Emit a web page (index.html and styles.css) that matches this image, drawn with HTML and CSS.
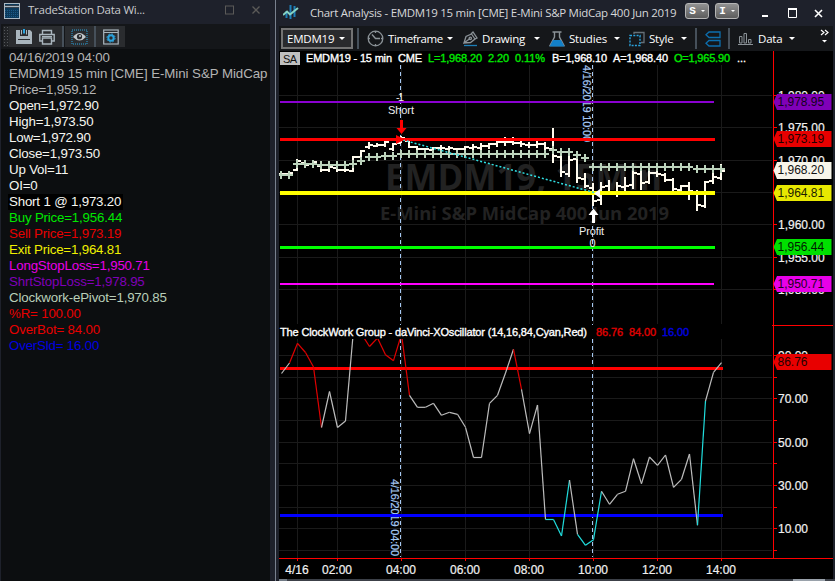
FILE: index.html
```html
<!DOCTYPE html>
<html lang="en">

<head>
  <meta charset="UTF-8" />
  <meta name="viewport" content="width=device-width, initial-scale=1.0" />
  <title>TradeStation</title>
  <link rel="stylesheet" href="styles.css">
</head>

<body>
  <div class="workspace">
    <section class="data-window">
      <header class="titlebar">
        <svg class="app-icon" width="17" height="17" viewBox="0 0 17 17">
          <rect x="0.5" y="0.5" width="15" height="15" fill="#0c3a5c" stroke="#a9b8c4" />
          <path d="M1 2.5H15M1 4.5H15" stroke="#38424e" />
          <path d="M1 3.5H15" stroke="#a9b8c4" />
          <path d="M1 7.5H15M1 9.5H15M1 11.5H15M1 13.5H15" stroke="#1c5a88" stroke-dasharray="1 1" />
        </svg>
        <span class="title">TradeStation Data Wi...</span>
        <svg class="win-buttons" width="38" height="12" viewBox="0 0 38 12">
          <rect x="1.5" y="2" width="8" height="8" fill="none" stroke="#5b5a58" />
          <path d="M28.5 2.5l7 7M35.5 2.5l-7 7" stroke="#5b5a58" stroke-width="1.3" />
        </svg>
      </header>

      <div class="data-body">
        <div class="data-toolbar">
          <span class="grip"></span>
          <div class="tool wide">
            <svg width="16" height="16" viewBox="0 0 16 16">
              <path d="M0 1H4V7H12V1H14L16 3V15H0Z" fill="#a9b5bd" />
              <path d="M2 10.500H14" stroke="#2a2c2f" />
              <path d="M5.500 1V5.500M10.500 1V5.500" stroke="#a9b5bd" />
              <path d="M8 0V4.500" stroke="#2ba3dd" stroke-width="2" />
            </svg>
            <svg width="16" height="16" viewBox="0 0 16 16" fill="none" stroke="#a9b5bd" stroke-width="1.4">
              <path d="M3.5 5V1.5H12.5V5M3.5 12H.8V5.5H15.2V12H12.5M3.5 9H12.5V15H3.5Z" />
              <path d="M3 7.5H13" stroke-width="1" />
            </svg>
          </div>
          <div class="tool">
            <svg width="17" height="16" viewBox="0 0 17 16">
              <rect x="1" y="1" width="15" height="14" fill="none" stroke="#2ba3dd" stroke-dasharray="1 1" />
              <path d="M2 8Q8.500 0 15 8Q8.500 15 2 8Z" fill="#c2c7ca" />
              <circle cx="8.500" cy="7.700" r="2.600" fill="#2a2c2f" /><circle cx="9" cy="7" r="1" fill="#c2c7ca" />
            </svg>
          </div>
          <div class="tool">
            <svg width="16" height="16" viewBox="0 0 16 16" fill="none">
              <rect x=".7" y="1" width="14.500" height="14" stroke="#a9b5bd" stroke-width="1.200" />
              <path d="M1 3.5H15" stroke="#a9b5bd" />
              <circle cx="8" cy="9" r="2.700" stroke="#2ba3dd" stroke-width="2" />
              <circle cx="8" cy="9" r="4.100" stroke="#2ba3dd" stroke-dasharray="1.600 1.620" />
            </svg>
          </div>
        </div>

        <div class="values">
          <p>04/16/2019 04:00</p>
          <p class="symbol-row">EMDM19 15 min [CME] E-Mini S&amp;P MidCap</p>
          <p>Price=1,959.12</p>
          <p class="white">Open=1,972.90</p>
          <p class="white">High=1,973.50</p>
          <p class="white">Low=1,972.90</p>
          <p class="white">Close=1,973.50</p>
          <p class="white">Up Vol=11</p>
          <p class="white">OI=0</p>
          <p class="white position">Short 1 @ 1,973.20</p>
          <p class="green">Buy Price=1,956.44</p>
          <p class="red">Sell Price=1,973.19</p>
          <p class="yellow">Exit Price=1,964.81</p>
          <p class="magenta">LongStopLoss=1,950.71</p>
          <p class="purple">ShrtStopLoss=1,978.95</p>
          <p class="pivot">Clockwork-ePivot=1,970.85</p>
          <p class="red">%R= 100.00</p>
          <p class="red">OverBot= 84.00</p>
          <p class="blue">OverSld= 16.00</p>
        </div>
      </div>
    </section>

    <section class="chart-window">
      <header class="titlebar">
        <svg class="chart-icon" width="16" height="16" viewBox="0 0 16 16" fill="none">
          <path d="M3.500 7V14M7.500 1V15M11.500 2V13" stroke="#1c7fb8" stroke-width="2" />
          <path d="M0 11L4 7.500L7 10.500L15 4" stroke="#86d3c4" stroke-width="2" />
        </svg>
        <span class="title">Chart Analysis - EMDM19 15 min [CME] E-Mini S&amp;P MidCap 400 Jun 2019</span>
        <span class="link-button">S<i class="caret"></i></span>
        <span class="link-button">I<i class="caret"></i></span>
        <svg class="win-controls" width="44" height="12" viewBox="0 0 44 12" fill="none" stroke="#fff">
          <path d="M0 9H6" stroke-width="2" />
          <path d="M26.500 2V10.500H34.500V2" />
          <path d="M26 2H35" stroke-width="2" />
        </svg>
        <svg class="win-close" width="9" height="9" viewBox="0 0 9 9" stroke="#fff" stroke-width="1.600">
          <path d="M1 1l7 7M8 1l-7 7" />
        </svg>
      </header>

      <nav class="chart-toolbar">
        <div class="symbol-button">EMDM19<i class="caret"></i></div>
        <span class="separator first"></span>
        <div class="menu timeframe">
          <svg width="17" height="17" viewBox="0 0 17 17" fill="none" stroke="#8b9297">
            <circle cx="8.500" cy="8.500" r="7.300" stroke-width="1.300" />
            <path d="M8.500 1V3M8.500 14V16M1 8.500H3M14 8.500H16M5 4.500L8.500 8.500H13" stroke-width="1.400" />
          </svg>
          <span>Timeframe</span><i class="caret"></i>
        </div>
        <div class="menu drawing">
          <svg width="15" height="16" viewBox="0 0 15 16" fill="none" stroke="#8b9297" stroke-width="1.300">
            <path d="M1 12L3 5.500L8.500 3L12 8L7.500 11.500L1 12L7 7.500M8 3L10 1L14 7L12 8" />
            <circle cx="7.300" cy="7.300" r="1.200" />
            <path d="M1 14.500H14" stroke="#1c7fb8" />
          </svg>
          <span>Drawing</span><i class="caret"></i>
        </div>
        <div class="menu studies">
          <svg width="16" height="16" viewBox="0 0 16 16">
            <path d="M3.500 1H12.500M5.500 1V6L1 14.500H15L10.500 6V1" fill="none" stroke="#8b9297" stroke-width="1.400" />
            <path d="M4 9H12L15.500 15.500H.5Z" fill="#1381c9" />
          </svg>
          <span>Studies</span><i class="caret"></i>
        </div>
        <div class="menu style">
          <svg width="16" height="16" viewBox="0 0 16 16" fill="none">
            <path d="M5 3V1.500H15V11.500H12" stroke="#667078" stroke-width="1.300" />
            <rect x="1" y="4.500" width="10" height="10" stroke="#2ba3dd" stroke-width="1.400" stroke-dasharray="2 1.300" />
          </svg>
          <span>Style</span><i class="caret"></i>
        </div>
        <span class="separator"></span>
        <svg class="tags-icon" width="16" height="16" viewBox="0 0 16 16" fill="none" stroke="#0d6fae" stroke-width="1.300">
          <path d="M4 1H15V6.500H4L1 3.800ZM4 9.500H15V15H4L1 12.200Z" />
        </svg>
        <span class="separator"></span>
        <div class="menu data">
          <svg width="16" height="14" viewBox="0 0 16 14" fill="none" stroke="#8b9297">
            <path d="M1.500 4.500H4V11H1.500ZM6 1.500H8.500V11H6ZM10.500 7.500H13V11H10.500ZM0 12.500H15" />
          </svg>
          <span>Data</span><i class="caret"></i>
        </div>
        <div class="overflow"><svg width="9" height="16" viewBox="0 0 9 16" fill="none" stroke="#fff" stroke-width="1.200">
            <path d="M1 1l3 2.500L1 6M5 1l3 2.500L5 6" /><path d="M2 11H7L4.500 13.500Z" fill="#fff" stroke="none" />
          </svg></div>
      </nav>

      <svg class="chart" id="chart" width="556" height="530" viewBox="279 51 556 530">
        <defs>
          <clipPath id="lowerPane"><rect x="279" y="339" width="494" height="219" /></clipPath>
        </defs>
        <rect x="279" y="51" width="554" height="528" fill="#000" />
        <rect x="279" y="579" width="556" height="2" fill="#3c4048" />
        <rect x="279" y="579" width="8" height="2" fill="#727b86" />
        <rect x="793" y="579" width="32" height="2" fill="#9aa2ab" />

        <g id="grid" class="grid"></g>

        <g class="watermark">
          <text x="385" y="190" font-size="36" textLength="277" lengthAdjust="spacingAndGlyphs">EMDM19, 15Min</text>
          <text x="380" y="220" font-size="18" textLength="289" lengthAdjust="spacingAndGlyphs">E-Mini S&amp;P MidCap 400 Jun 2019</text>
        </g>

        <!-- crosshair lines -->
        <path class="crosshair" d="M400.500 65V325M400.500 339V557M592.500 65V325M592.500 339V557" />
        <text class="crosshair-label" transform="translate(582.500 65) rotate(90)" textLength="77">4/16/2019 10:00</text>
        <text class="crosshair-label" transform="translate(390.500 479) rotate(90)" textLength="77">4/16/2019 04:00</text>

        <g id="bars" class="bars"></g>
        <g id="pivot" class="pivot-line"></g>

        <!-- price levels -->
        <path d="M280 102H714" stroke="#8a00d0" stroke-width="2" />
        <path d="M280 139.500H715" stroke="#f00" stroke-width="3" />
        <path d="M280 193H715" stroke="#ff0" stroke-width="4" />
        <path d="M280 247.500H715" stroke="#0f0" stroke-width="3" />
        <path d="M280 284H714" stroke="#f0f" stroke-width="2" />

        <!-- trade entry and exit -->
        <path d="M403 140L596 193" stroke="#2fe0e4" stroke-width="1.500" stroke-dasharray="2 2" />
        <path d="M396 135L405 139.500L396 144Z" fill="#f00" />
        <path d="M594 193.500L600 189V198Z" fill="#fff" />
        <path d="M400 120H403V128H406.500L401.500 134L396.500 128H400Z" fill="#f00" />
        <path d="M592 223H595V215H598.500L593.500 208.500L588.500 215H592Z" fill="#fff" />
        <text class="note" x="396" y="101" textLength="8">-1</text>
        <text class="note" x="388" y="114" textLength="26">Short</text>
        <text class="note" x="579" y="235" textLength="25">Profit</text>
        <text class="note" x="589.500" y="247">0</text>

        <!-- status line -->
        <rect x="280" y="52" width="20" height="13" fill="#c0c0c0" />
        <g class="status">
          <text class="badge" x="283" y="62.500" textLength="14">SA</text>
          <text class="light" x="306" y="62" textLength="86">EMDM19 - 15 min</text>
          <text class="light" x="398" y="62" textLength="24">CME</text>
          <text class="up" x="428" y="62" textLength="54">L=1,968.20</text>
          <text class="up" x="488" y="62" textLength="21">2.20</text>
          <text class="up" x="515" y="62" textLength="30">0.11%</text>
          <text class="light" x="552" y="62" textLength="55">B=1,968.10</text>
          <text class="light" x="613" y="62" textLength="55">A=1,968.40</text>
          <text class="up" x="674" y="62" textLength="56">O=1,965.90</text>
          <text class="light" x="737" y="62">...</text>
          <text class="light" x="280" y="336" textLength="307">The ClockWork Group - daVinci-XOscillator (14,16,84,Cyan,Red)</text>
          <text class="over-bought" x="596" y="336" textLength="27">86.76</text>
          <text class="over-bought" x="629" y="336" textLength="27">84.00</text>
          <text class="over-sold" x="662" y="336" textLength="27">16.00</text>
        </g>

        <!-- oscillator -->
        <path d="M280 368.500H723" stroke="#f00" stroke-width="3" />
        <path d="M280 515.500H723" stroke="#00f" stroke-width="3" />
        <g id="oscillator" class="oscillator" clip-path="url(#lowerPane)"></g>

        <path class="axis" d="M773.500 51V558M772 325.500H833M279 558.500H833" />
        <g id="scales" class="scales"></g>
      </svg>
    </section>
  </div>

  <script src="chart.js"></script>
</body>

</html>
```
FILE: chart.js
```js
const NS = "http://www.w3.org/2000/svg";
const START_X = 281;
const STEP = 8;

function add(parentId, tag, attrs, text) {
  const el = document.createElementNS(NS, tag);
  for (const key in attrs) el.setAttribute(key, attrs[key]);
  if (text) el.textContent = text;
  document.getElementById(parentId).appendChild(el);
}

// grid
const columns = [297, 337, 401, 465, 529, 593, 657, 721];
const upperRows = [95, 127, 160, 192, 224, 257, 289];
const lowerRows = [355, 377, 398, 420, 442, 463, 485, 507, 528, 550];
columns.forEach(x => add("grid", "path", { d: `M${x + 0.5} 65V324M${x + 0.5} 339V558` }));
upperRows.concat(lowerRows).forEach(y => add("grid", "path", { d: `M279 ${y + 0.5}H772` }));

// [high, low, open, close]
const bars = [
  [171, 178, 174, 174], [171, 177, 174, 173], [159, 171, 170, 161], [162, 167, 163, 165],
  [160, 167, 164, 162], [166, 172, 166, 170], [166, 172, 170, 167], [168, 172, 168, 170],
  [168, 172, 170, 170], [156, 172, 171, 157], [150, 160, 157, 151], [142, 149, 147, 145],
  [143, 147, 146, 145], [141, 147, 145, 142], [143, 151, 149, 144], [136, 143, 143, 138],
  [139, 148, 141, 147], [146, 151, 147, 149], [148, 151, 149, 149], [147, 151, 150, 148],
  [145, 151, 148, 148], [146, 152, 149, 148], [148, 153, 149, 149], [146, 152, 149, 147],
  [144, 150, 148, 147], [143, 150, 148, 146], [143, 149, 146, 144], [140, 147, 144, 142],
  [137, 146, 142, 142], [137, 145, 142, 143], [140, 147, 143, 144], [142, 148, 145, 145],
  [140, 148, 145, 144], [142, 150, 144, 148], [128, 163, 149, 156], [155, 177, 157, 172],
  [152, 177, 174, 160], [156, 183, 159, 178], [173, 188, 179, 186], [183, 206, 188, 201],
  [182, 205, 200, 187], [180, 194, 186, 192], [182, 197, 193, 186], [177, 192, 187, 186],
  [171, 189, 185, 173], [170, 190, 174, 183], [171, 184, 182, 173], [170, 177, 173, 174],
  [173, 182, 175, 180], [178, 192, 180, 189], [185, 194, 190, 186], [182, 200, 186, 191],
  [190, 211, 192, 205], [181, 208, 206, 182], [173, 184, 181, 177], [164, 180, 178, 171]
];
bars.forEach(([h, l, o, c], i) => {
  const x = START_X + i * STEP;
  add("bars", "path", { d: `M${x} ${h}V${l}M${x - 4} ${o}H${x}M${x} ${c}H${x + 4}` });
});

// [first bar, last bar, y]
const pivots = [
  [0, 1, 175], [2, 4, 164], [5, 8, 165], [9, 9, 164], [10, 10, 161], [11, 12, 157],
  [13, 14, 156], [15, 33, 154], [34, 34, 150], [35, 36, 152], [37, 37, 155], [38, 38, 158],
  [39, 51, 167], [52, 55, 169]
];
pivots.forEach(([from, to, y]) => {
  let d = `M${START_X + from * STEP - 4} ${y}H${START_X + to * STEP + 4}`;
  for (let i = from; i <= to; i++) d += `M${START_X + i * STEP} ${y - 4}v8`;
  add("pivot", "path", { d });
});

const osc = [
  373.5, 363, 343.3, 352.5, 367, 427.5, 391.5, 427.5, 421, 330, 334, 346.5, 338, 354.7,
  360.7, 334, 395.3, 407.3, 407.3, 403.3, 415.3, 412.3, 414.3, 427.3, 457.5, 457.5, 403.3,
  395.3, 373, 349.3, 389.3, 433.7, 405, 519.5, 519.5, 536, 480, 534.3, 545.3, 539.7, 491.3,
  504.3, 494.3, 491.3, 458.7, 483.7, 457, 465.3, 455, 487.3, 479.3, 454, 525.3, 401, 372.3, 362.7
];
const RED = [1, 2, 3, 4, 10, 11, 12, 13, 14, 15, 29];
const CYAN = [33, 34, 35, 37, 38, 39, 52];
for (let i = 0; i < osc.length - 1; i++) {
  const stroke = RED.includes(i) ? "#e00000" : CYAN.includes(i) ? "#20dede" : "#bdbdbd";
  const x = START_X + i * STEP + 0.5;
  add("oscillator", "path", { d: `M${x} ${osc[i]}L${x + STEP} ${osc[i + 1]}`, stroke });
}

// axis ticks and labels
upperRows.concat(lowerRows).forEach(y => add("scales", "path", { d: `M774 ${y + 0.5}h3`, stroke: "#f00" }));
columns.forEach(x => add("scales", "path", { d: `M${x + 0.5} 559v2`, stroke: "#f00" }));

[["1,980.00", 99.5], ["1,975.00", 132], ["1,970.00", 164.5], ["1,960.00", 229], ["1,955.00", 262], ["1,950.00", 294],
 ["90.00", 360], ["70.00", 403], ["50.00", 447], ["30.00", 490], ["10.00", 533]].forEach(([label, y]) =>
  add("scales", "text", { x: 778, y, class: "label" }, label));

const hours = ["4/16", "02:00", "04:00", "06:00", "08:00", "10:00", "12:00", "14:00"];
hours.forEach((label, i) =>
  add("scales", "text", { x: columns[i], y: 574, class: "label", "text-anchor": "middle" }, label));

// price tags: label, top, height, colour, text colour
[["1,978.95", 94, 16, "#8000b8", "#14001e"], ["1,973.19", 131, 16, "#e80000", "#1e0000"],
 ["1,968.20", 162, 17, "#f7f5ea", "#111"], ["1,964.81", 185, 16, "#e8e800", "#1c1c00"],
 ["1,956.44", 239, 16, "#00e000", "#001c00"], ["1,950.71", 276, 16, "#e800e8", "#1e001e"],
 ["86.76", 354, 16, "#e80000", "#1e0000"]].forEach(([label, y, h, fill, ink]) => {
  add("scales", "path", { d: `M773.500 ${y + h / 2}L777 ${y}H831.500V${y + h}H777Z`, fill });
  add("scales", "text", { x: 777.5, y: y + 12, fill: ink }, label);
});
```
FILE: styles.css
```css
body {
  margin: 0;
  background-color: #1e212b;
  font-family: 'Open Sans', 'Noto Sans', sans-serif;
  color: #fff;
  overflow: hidden;
}

p {
  margin: 0;
}

.workspace {
  display: flex;
  width: 835px;
  height: 581px;
}

.titlebar {
  display: flex;
  align-items: center;
  font-size: 12px;
  white-space: nowrap;
}

/* data window */
.data-window {
  width: 275px;
  border-right: 1px solid #79818e;
  box-sizing: content-box;
  flex: none;
}

.data-window .titlebar {
  height: 24px;
  padding: 0 13px 0 4px;
  box-sizing: border-box;
  color: #c9cbce;
}

.app-icon {
  margin-top: -2px;
}

.data-window .title {
  margin: -5px auto 0 7px;
  font-size: 11.5px;
  letter-spacing: -0.25px;
}

.win-buttons {
  margin-top: -4px;
}

.data-body {
  width: 269px;
  height: 557px;
  margin-left: 1px;
  background-color: #0c0e10;
}

.data-toolbar {
  display: flex;
  gap: 2px;
  height: 25px;
  padding: 2px 0 2px 2px;
  box-sizing: border-box;
  background-color: #141619;
}

.grip {
  width: 6px;
  margin-right: -2px;
  background-color: #222427;
  background-image: radial-gradient(#55585c 0.8px, transparent 1px);
  background-size: 3px 3px;
}

.tool {
  display: flex;
  align-items: center;
  justify-content: center;
  width: 29px;
  margin-right: -1px;
  border-right: 2px solid #46505a;
  background-color: #2a2c2f;
}

.tool:last-child {
  margin-left: -1px;
  border-right: 0;
}

.tool.wide {
  width: 53px;
  gap: 8px;
}

.tool.wide svg {
  margin-left: -1px;
}

.values {
  padding: 1px 0 0 8px;
  font-family: 'Liberation Sans', Arial, sans-serif;
  font-size: 13.3px;
  line-height: 16px;
  letter-spacing: -0.18px;
  color: #b4b4b4;
  white-space: nowrap;
}

.symbol-row {
  letter-spacing: -0.06px;
}

.white {
  color: #f6f6f0;
}

.position {
  width: 114px;
  margin-left: -1px;
  padding-left: 1px;
  background-color: #000;
}

.green {
  color: #00e800;
}

.red {
  color: #e80000;
}

.yellow {
  color: #f0f000;
}

.magenta {
  color: #e800e8;
}

.purple {
  color: #8000b8;
}

.pivot {
  color: #b9ceb9;
}

.blue {
  color: #0000e0;
}

/* chart window */
.chart-window {
  width: 556px;
  margin-left: 3px;
  flex: none;
}

.chart-window .titlebar {
  height: 26px;
  color: #d6d7d9;
}

.chart-icon {
  margin: -2px 0 0 4px;
}

.chart-window .title {
  width: 369px;
  margin: -2px 6px 0 11px;
  font-size: 11.5px;
  letter-spacing: -0.28px;
}

.link-button {
  display: flex;
  align-items: center;
  justify-content: center;
  gap: 5px;
  width: 24px;
  height: 16px;
  margin: -4px 6px 0 0;
  box-sizing: border-box;
  border: 1px solid #b5b5b5;
  border-radius: 3px;
  background: linear-gradient(#929292, #5d5d5d);
  font: bold 11px 'Liberation Mono', monospace;
  color: #fff;
}

.caret {
  border: 3px solid transparent;
  border-top-color: #fff;
  border-bottom: 0;
}

.link-button .caret {
  border-width: 2.5px;
  border-bottom: 0;
}

.win-controls {
  margin: 0 15px 0 17px;
}

.win-close {
  margin-left: -7px;
}

.chart-toolbar {
  display: flex;
  align-items: center;
  width: 554px;
  height: 25px;
  background-color: #15171a;
  font-size: 11.5px;
  letter-spacing: -0.2px;
}

.symbol-button {
  display: flex;
  align-items: center;
  justify-content: space-between;
  width: 72px;
  height: 21px;
  margin: 0 4px 0 2px;
  padding: 0 6px 1px 4px;
  box-sizing: border-box;
  border: 2px solid #737373;
  background-color: #292a2d;
}

.separator {
  width: 2px;
  height: 21px;
  background-color: #46505a;
}

.menu {
  display: flex;
  align-items: center;
  height: 25px;
}

.menu svg {
  margin-right: 4px;
  flex: none;
}

.menu span {
  margin-top: -1px;
}

.menu .caret {
  margin-left: auto;
}

.timeframe {
  width: 86px;
  margin-left: 8px;
}

.timeframe span {
  letter-spacing: -0.4px;
}

.drawing {
  width: 77px;
  margin-left: 10px;
}

.studies {
  width: 71px;
  margin-left: 9px;
}

.style {
  width: 58px;
  margin: 0 8px 0 9px;
}

.tags-icon {
  margin: 0 7px 0 8px;
}

.data {
  width: 57px;
  margin-left: 8px;
}

.overflow {
  margin-left: auto;
  margin-right: 4px;
}

/* chart */
.chart {
  display: block;
  font-family: 'Liberation Sans', Arial, sans-serif;
}

.grid {
  stroke: #1a1a1a;
}

.watermark {
  font-family: 'Open Sans', 'Noto Sans', sans-serif;
  font-weight: bold;
  fill: #222;
}

.crosshair {
  fill: none;
  stroke: #a5c8f2;
  stroke-dasharray: 4 3;
}

.crosshair-label {
  font-size: 11px;
  fill: #a5c8f2;
  stroke: #a5c8f2;
  stroke-width: 0.2px;
}

.bars {
  fill: none;
  stroke: #fffbee;
  stroke-width: 2;
}

.pivot-line {
  fill: none;
  stroke: #bcd3bc;
  stroke-width: 2;
}

.note {
  font-size: 11px;
  fill: #eee;
}

.status {
  font-size: 11px;
  stroke-width: 0.35px;
}

.badge {
  fill: #111;
}

.light {
  fill: #fff;
  stroke: #fff;
}

.up {
  fill: #00e800;
  stroke: #00e800;
}

.over-bought {
  fill: #e00000;
  stroke: #e00000;
}

.over-sold {
  fill: #0000e0;
  stroke: #0000e0;
}

.oscillator {
  fill: none;
  stroke-width: 1.2;
}

.axis {
  fill: none;
  stroke: #f00;
}

.scales {
  font-size: 12px;
}

.label {
  fill: #f0f0f0;
  stroke: #f0f0f0;
  stroke-width: 0.2px;
}
```
